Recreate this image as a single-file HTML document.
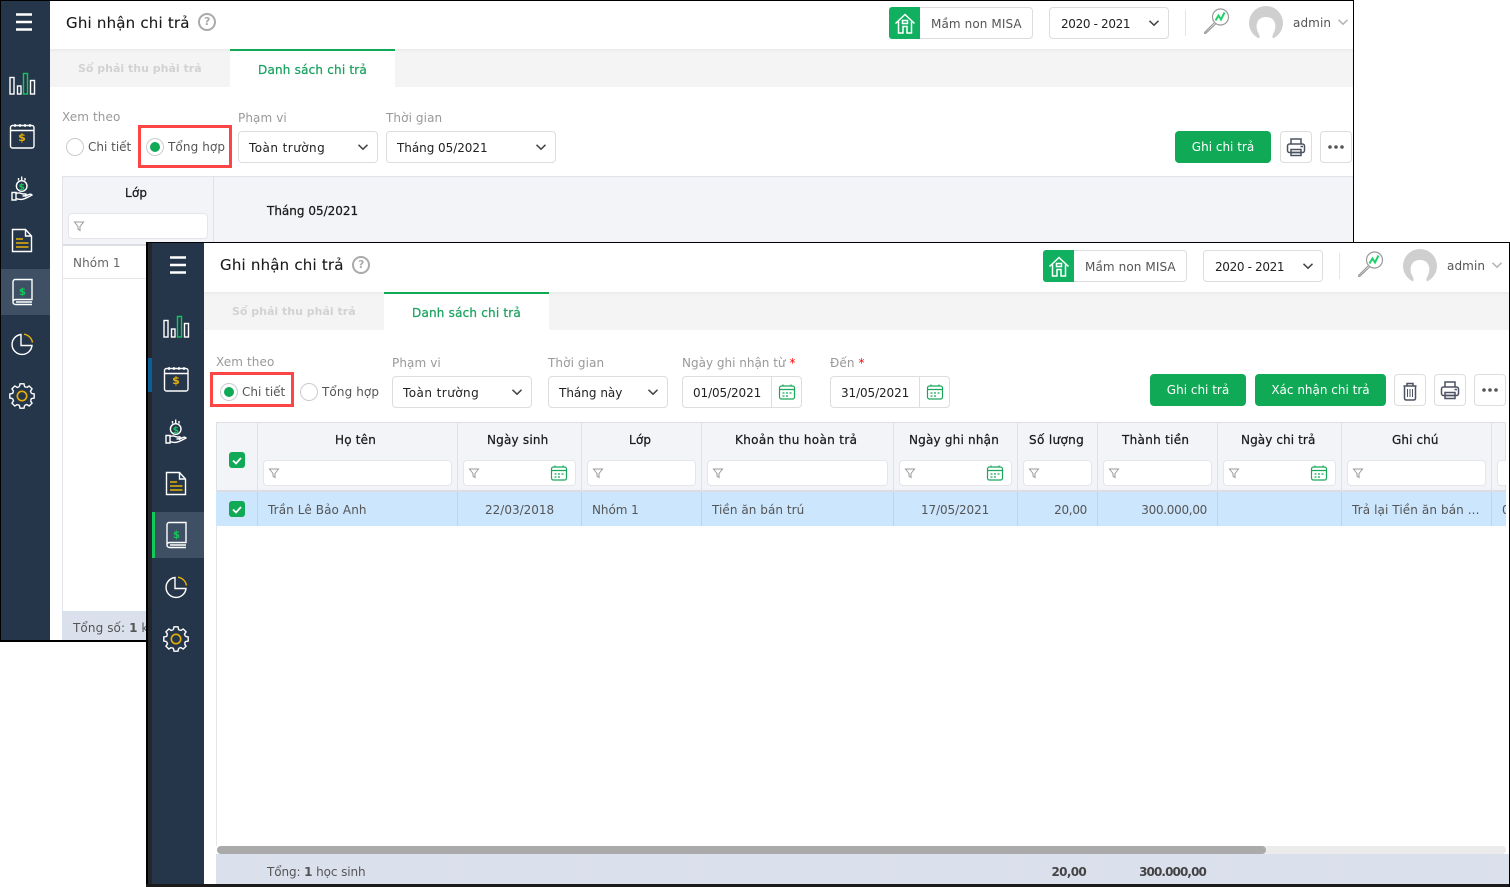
<!DOCTYPE html>
<html lang="vi"><head><meta charset="utf-8"><title>Ghi nhận chi trả</title>
<style>
html,body{margin:0;padding:0;width:1510px;height:887px;overflow:hidden;background:#fff}
div,span,svg{position:absolute;box-sizing:border-box}
.t{white-space:nowrap;font:12px/20px "DejaVu Sans",sans-serif;color:#444;letter-spacing:.1px;margin-top:1px}
.h{color:#1a1a1a;-webkit-text-stroke:.25px #1a1a1a;letter-spacing:.2px}
.l{color:#999}
.d{color:#222}
.g{color:#555}
.b{background:#fff;border:1px solid #ddd;border-radius:4px}
.f{background:#fff;border:1px solid #e6e6ea;border-radius:4px;height:26px;top:460px}
.btn{background:#10a956;border-radius:4px;color:#fff;text-align:center;font:12px/33px "DejaVu Sans",sans-serif;height:32px}
.ln{background:#dfe1ea;width:1px}
.c{background:linear-gradient(#dfe1ea 70px,#c3d3e6 70px);width:1px;top:422px;height:104px}
</style></head><body>
<svg width="0" height="0" style="left:0;top:0">
<defs>
<g id="side" fill="none" stroke="#fff" stroke-width="1.4">
<path d="M16 14.5h16M16 22h16M16 29.5h16" stroke-width="2.4"/>
<rect x="10" y="77.5" width="4" height="16.5"/><rect x="17.5" y="86" width="3.5" height="8"/><rect x="23.5" y="73.5" width="4" height="20.5" stroke="#12c95a"/><rect x="30.5" y="80.5" width="4" height="13.5"/>
<rect x="10.5" y="125.5" width="23.5" height="22.5" rx="2"/><path d="M10.5 130.5h23.5M15 124v3M20 124v3M25 124v3M30 124v3"/>
<circle cx="21.7" cy="186" r="5.3"/><path d="M21.7 176.500v3.500M18.500 178v2.500M25 178v2.500"/><path d="M12 192.500h4v7.500h-4zM16 193.500c3-1.500 5 0 7 .5h3c1 1.500-1 2-3.500 2M16 198.500c5 2 8 1 16-3.500-1-1.500-4-.5-7 1.500"/>
<path d="M12.500 229.500h13l6 6.500v15.500h-19zM25.500 229.500v6.500h6"/><path d="M16 239h7M16 243h12.500M16 247h12.500" stroke="#e8b007" stroke-width="1.500"/>
<path d="M15 279.500h17v20H15.500c-1.500 0-2.500 1-2.500 2.500s1 2.500 2.500 2.500H32M13 302V282c0-1.500 1-2.500 2-2.500M16 302h16"/>
<path d="M21 334.500a10 10 0 1 0 11 11H21z"/><path d="M24 334.200a10 10 0 0 1 8.500 8.300" stroke="#e8b007"/>
<circle cx="22" cy="396" r="4.700" stroke="#e8b007" stroke-width="1.600"/>
<g transform="translate(22 396)" id="gear"><path id="tt" d="M-2.600-9.400L-2-12.200H2L2.600-9.400L4.810-8.480"/>
<use href="#tt" transform="rotate(45)"/><use href="#tt" transform="rotate(90)"/><use href="#tt" transform="rotate(135)"/><use href="#tt" transform="rotate(180)"/><use href="#tt" transform="rotate(225)"/><use href="#tt" transform="rotate(270)"/><use href="#tt" transform="rotate(315)"/></g>
</g>
<g id="top" fill="none">
<path d="M895.500 23.500L905 14.500l9.500 9M898.500 21.500v11.500h4.500v-6.500h4v6.500h4.500V21.500M902.500 20.500h5v3h-5z" stroke="#fff" stroke-width="1.500"/>
<circle cx="1220.500" cy="17" r="8" stroke="#999" stroke-width="1.200"/><path d="M1214 23l-2 2-7 7c-1 1-.5 1.500.5 1.500l8-7.500 2-2" stroke="#999" stroke-width="1.200"/><path d="M1215.500 20.500l3-5 2.500 4 3.500-7" stroke="#1fd16a" stroke-width="2"/>
<circle cx="1266" cy="23" r="17" fill="#cfcfcf"/><path d="M1258 40c3-4 1-5-.5-9-2-5-1-14 8.500-14s10.500 9 8.500 14c-1.500 4-3.500 5-.5 9z" fill="#fff"/>
</g>
<g id="cal" fill="none" stroke="#19a85b" stroke-width="1.200"><rect x="-7.500" y="-6" width="15" height="13" rx="2"/><path d="M-7.500-2.500h15M-4-7.500v2M4-7.500v2"/><path d="M-4.500 1h2M-1 1h2M2.500 1h2M-4.500 4h2M-1 4h2" stroke-width="1.300"/></g>
<path id="fil" d="M-4.500-4h9L1 .5v4L-1 3V.5z" fill="none" stroke="#999" stroke-width="1"/>
<g id="prn" fill="none" stroke="#4d5262" stroke-width="1.500"><path d="M-5-3v-5h10v5"/><rect x="-8.500" y="-3" width="17" height="8.500" rx="2"/><path d="M-5 2.500h10v6H-5zM-5 5.500h10"/><path d="M4.500-.500h2.500" /></g>
<g id="chev" fill="none" stroke="#444" stroke-width="1.500"><path d="M-4.500-2.200L0 2.200l4.500-4.400"/></g>
</defs></svg>

<!-- WINDOW 1 -->
<div style="left:0;top:0;width:1354px;height:642px;background:#fff;border:1px solid #000;border-bottom-width:2px"></div>
<div style="left:1px;top:1px;width:49px;height:639px;background:#25364a"></div>
<div style="left:1px;top:269px;width:49px;height:46px;background:#3f5064"></div>
<div style="left:50px;top:49px;width:1303px;height:38px;background:#f4f4f4;box-shadow:inset 0 3px 3px -2px #e6e6e6"></div>
<div style="left:230px;top:49px;width:165px;height:38px;background:#fff;border-top:2px solid #10a956"></div>
<span class="t h" style="left:66px;top:12px;font-size:15px;-webkit-text-stroke:.1px #1a1a1a;letter-spacing:.2px">Ghi nhận chi trả</span>
<div style="left:198px;top:13px;width:18px;height:18px;border:2px solid #aaa;border-radius:50%"></div><span class="t" style="left:204px;top:11px;font-weight:bold;color:#aaa;font-size:11px">?</span>
<span class="t" style="left:78px;top:58px;font-weight:bold;color:#d2d2d2;font-size:11px;letter-spacing:0">Sổ phải thu phải trả</span>
<span class="t h" style="left:258px;top:59px;color:#1ba261;-webkit-text-stroke:.25px #1ba261">Danh sách chi trả</span>
<div class="b" style="left:889px;top:7px;width:144px;height:32px"></div><div style="left:889px;top:7px;width:31px;height:32px;background:#10b060;border-radius:3px 0 0 3px"></div>
<span class="t g" style="left:931px;top:13px">Mầm non MISA</span>
<div class="b" style="left:1049px;top:7px;width:120px;height:32px"></div><span class="t d" style="left:1061px;top:13px;letter-spacing:-.35px">2020 - 2021</span>
<div style="left:1185px;top:10px;width:1px;height:26px;background:#e6e6e6"></div>
<span class="t g" style="left:1293px;top:12px">admin</span>

<span class="t l" style="left:62px;top:106px">Xem theo</span>
<div style="left:66px;top:138px;width:18px;height:18px;border:1px solid #ccc;border-radius:50%"></div><span class="t g" style="left:88px;top:136px;letter-spacing:0">Chi tiết</span>
<div style="left:138px;top:125px;width:94px;height:43px;border:3px solid #fc4646"></div>
<div style="left:146px;top:138px;width:18px;height:18px;border:1px solid #ccc;border-radius:50%"></div><div style="left:150px;top:142px;width:10px;height:10px;background:#10a956;border-radius:50%"></div>
<span class="t g" style="left:168px;top:136px">Tổng hợp</span>
<span class="t l" style="left:238px;top:107px">Phạm vi</span>
<div class="b" style="left:238px;top:131px;width:140px;height:32px"></div><span class="t d" style="left:249px;top:137px;letter-spacing:.45px">Toàn trường</span>
<span class="t l" style="left:386px;top:107px">Thời gian</span>
<div class="b" style="left:386px;top:131px;width:170px;height:32px"></div><span class="t d" style="left:397px;top:137px;letter-spacing:-.05px">Tháng 05/2021</span>
<div class="btn" style="left:1175px;top:131px;width:96px">Ghi chi trả</div>
<div class="b" style="left:1280px;top:131px;width:32px;height:32px"></div>
<div class="b" style="left:1320px;top:131px;width:32px;height:32px"></div>

<div style="left:62px;top:176px;width:1291px;height:70px;background:#f3f4f8;border:1px solid #e2e3ea;border-right:0;border-bottom:2px solid #dcdde3"></div>
<div class="ln" style="left:213px;top:176px;height:70px"></div>
<div style="left:62px;top:176px;width:1px;height:435px;background:#e2e3ea"></div>
<span class="t h" style="left:125px;top:182px">Lớp</span>
<span class="t h" style="left:267px;top:200px;letter-spacing:0">Tháng 05/2021</span>
<div class="f" style="left:68px;top:213px;width:140px"></div>
<span class="t g" style="left:73px;top:252px;color:#666">Nhóm 1</span>
<div style="left:63px;top:278px;width:1290px;height:1px;background:#e6e6ea"></div>
<div style="left:213px;top:246px;width:1px;height:33px;background:#e6e6ea"></div>
<div style="left:62px;top:611px;width:1291px;height:29px;background:#dae1ed"></div>
<span class="t g" style="left:73px;top:617px">Tổng số: <b>1</b> k</span>

<svg width="1510" height="887" style="left:0;top:0">
<use href="#side"/><use href="#top"/>
<text x="22" y="141" text-anchor="middle" font-family="DejaVu Sans" font-size="11" font-weight="bold" fill="#e8b007">$</text>
<text x="21.700" y="190" text-anchor="middle" font-family="DejaVu Sans" font-size="9" font-weight="bold" fill="#12c95a">$</text>
<text x="22.500" y="295" text-anchor="middle" font-family="DejaVu Sans" font-size="10" font-weight="bold" fill="#12c95a">$</text>
<use href="#chev" transform="translate(1154 23)"/><use href="#chev" transform="translate(1343 22)" opacity=".4"/>
<use href="#chev" transform="translate(363 147)"/><use href="#chev" transform="translate(541 147)"/>
<use href="#prn" transform="translate(1296 147)"/>
<g fill="#555"><circle cx="1330" cy="147" r="1.800"/><circle cx="1336" cy="147" r="1.800"/><circle cx="1342" cy="147" r="1.800"/></g>
<use href="#fil" transform="translate(79 226)"/>
</svg>

<!-- WINDOW 2 -->
<div style="left:146px;top:242px;width:1364px;height:645px;background:#fff;border:1px solid #000;border-left-width:2px;border-right-width:1px;border-bottom:0"></div>
<div style="left:148px;top:243px;width:4px;height:644px;background:#23272b"></div>
<div style="left:148px;top:358px;width:4px;height:34px;background:#0b5f96"></div>
<div style="left:152px;top:243px;width:52px;height:644px;background:#25364a"></div>
<div style="left:152px;top:512px;width:52px;height:46px;background:#3f5064"></div>
<div style="left:152px;top:512px;width:3px;height:46px;background:#12c95a"></div>
<div style="left:204px;top:292px;width:1305px;height:38px;background:#f4f4f4;box-shadow:inset 0 3px 3px -2px #e6e6e6"></div>
<div style="left:384px;top:292px;width:165px;height:38px;background:#fff;border-top:2px solid #10a956"></div>
<span class="t h" style="left:220px;top:254px;font-size:15px;-webkit-text-stroke:.1px #1a1a1a;letter-spacing:.2px">Ghi nhận chi trả</span>
<div style="left:352px;top:256px;width:18px;height:18px;border:2px solid #aaa;border-radius:50%"></div><span class="t" style="left:358px;top:254px;font-weight:bold;color:#aaa;font-size:11px">?</span>
<span class="t" style="left:232px;top:301px;font-weight:bold;color:#d2d2d2;font-size:11px;letter-spacing:0">Sổ phải thu phải trả</span>
<span class="t h" style="left:412px;top:302px;color:#1ba261;-webkit-text-stroke:.25px #1ba261">Danh sách chi trả</span>
<div class="b" style="left:1043px;top:250px;width:144px;height:32px"></div><div style="left:1043px;top:250px;width:31px;height:32px;background:#10b060;border-radius:3px 0 0 3px"></div>
<span class="t g" style="left:1085px;top:256px">Mầm non MISA</span>
<div class="b" style="left:1203px;top:250px;width:120px;height:32px"></div><span class="t d" style="left:1215px;top:256px;letter-spacing:-.35px">2020 - 2021</span>
<div style="left:1339px;top:253px;width:1px;height:26px;background:#e6e6e6"></div>
<span class="t g" style="left:1447px;top:255px">admin</span>

<span class="t l" style="left:216px;top:351px">Xem theo</span>
<div style="left:210px;top:372px;width:84px;height:35px;border:3px solid #fc4646"></div>
<div style="left:220px;top:383px;width:18px;height:18px;border:1px solid #ccc;border-radius:50%"></div><div style="left:224px;top:387px;width:10px;height:10px;background:#10a956;border-radius:50%"></div>
<span class="t g" style="left:242px;top:381px;letter-spacing:0">Chi tiết</span>
<div style="left:300px;top:383px;width:18px;height:18px;border:1px solid #ccc;border-radius:50%"></div><span class="t g" style="left:322px;top:381px">Tổng hợp</span>
<span class="t l" style="left:392px;top:352px">Phạm vi</span>
<div class="b" style="left:392px;top:376px;width:140px;height:32px"></div><span class="t d" style="left:403px;top:382px;letter-spacing:.45px">Toàn trường</span>
<span class="t l" style="left:548px;top:352px">Thời gian</span>
<div class="b" style="left:548px;top:376px;width:120px;height:32px"></div><span class="t d" style="left:559px;top:382px;letter-spacing:0">Tháng này</span>
<span class="t l" style="left:682px;top:352px;letter-spacing:0">Ngày ghi nhận từ <span style="position:static;color:#f00">*</span></span>
<div class="b" style="left:682px;top:376px;width:120px;height:32px"></div><div style="left:771px;top:376px;width:1px;height:32px;background:#ddd"></div><span class="t d" style="left:693px;top:382px;letter-spacing:-.1px">01/05/2021</span>
<span class="t l" style="left:830px;top:352px">Đến <span style="position:static;color:#f00">*</span></span>
<div class="b" style="left:830px;top:376px;width:120px;height:32px"></div><div style="left:919px;top:376px;width:1px;height:32px;background:#ddd"></div><span class="t d" style="left:841px;top:382px;letter-spacing:-.1px">31/05/2021</span>
<div class="btn" style="left:1150px;top:374px;width:96px">Ghi chi trả</div>
<div class="btn" style="left:1255px;top:374px;width:131px">Xác nhận chi trả</div>
<div class="b" style="left:1394px;top:374px;width:32px;height:32px"></div>
<div class="b" style="left:1434px;top:374px;width:32px;height:32px"></div>
<div class="b" style="left:1474px;top:374px;width:32px;height:32px"></div>

<div style="left:216px;top:422px;width:1290px;height:70px;background:#f3f4f8;border:1px solid #e0e1e8;border-bottom:2px solid #dcdde3"></div>
<div style="left:216px;top:492px;width:1290px;height:34px;background:#cce6fd"></div>
<div style="left:216px;top:526px;width:1px;height:320px;background:#e6e6ea"></div>
<div style="left:216px;top:854px;width:1293px;height:30px;background:#dae1ed"></div>
<div class="c" style="left:257px"></div><div class="c" style="left:457px"></div><div class="c" style="left:581px"></div><div class="c" style="left:701px"></div><div class="c" style="left:893px"></div><div class="c" style="left:1017px"></div><div class="c" style="left:1097px"></div><div class="c" style="left:1217px"></div><div class="c" style="left:1341px"></div><div class="c" style="left:1491px"></div>
<div class="ln" style="left:256px;top:854px;height:30px"></div><div class="ln" style="left:456px;top:854px;height:30px"></div><div class="ln" style="left:580px;top:854px;height:30px"></div><div class="ln" style="left:700px;top:854px;height:30px"></div><div class="ln" style="left:892px;top:854px;height:30px"></div><div class="ln" style="left:1016px;top:854px;height:30px"></div><div class="ln" style="left:1096px;top:854px;height:30px"></div><div class="ln" style="left:1216px;top:854px;height:30px"></div><div class="ln" style="left:1340px;top:854px;height:30px"></div><div class="ln" style="left:1490px;top:854px;height:30px"></div>

<span class="t h" style="left:335px;top:429px">Họ tên</span>
<span class="t h" style="left:487px;top:429px">Ngày sinh</span>
<span class="t h" style="left:629px;top:429px">Lớp</span>
<span class="t h" style="left:735px;top:429px;letter-spacing:.35px">Khoản thu hoàn trả</span>
<span class="t h" style="left:909px;top:429px">Ngày ghi nhận</span>
<span class="t h" style="left:1029px;top:429px;letter-spacing:.35px">Số lượng</span>
<span class="t h" style="left:1122px;top:429px;letter-spacing:.3px">Thành tiền</span>
<span class="t h" style="left:1241px;top:429px;letter-spacing:.1px">Ngày chi trả</span>
<span class="t h" style="left:1392px;top:429px;letter-spacing:.1px">Ghi chú</span>

<div class="f" style="left:263px;width:189px"></div><div class="f" style="left:463px;width:113px"></div><div class="f" style="left:587px;width:109px"></div><div class="f" style="left:707px;width:181px"></div><div class="f" style="left:899px;width:113px"></div><div class="f" style="left:1023px;width:69px"></div><div class="f" style="left:1103px;width:109px"></div><div class="f" style="left:1223px;width:113px"></div><div class="f" style="left:1347px;width:139px"></div><div class="f" style="left:1497px;width:9px;border-right:0;border-radius:4px 0 0 4px"></div>

<div style="left:229px;top:452px;width:16px;height:16px;background:#10a956;border-radius:3px"></div>
<div style="left:229px;top:501px;width:16px;height:16px;background:#10a956;border-radius:3px"></div>

<span class="t g" style="left:268px;top:499px">Trần Lê Bảo Anh</span>
<span class="t g" style="left:485px;top:499px;letter-spacing:0">22/03/2018</span>
<span class="t g" style="left:592px;top:499px;letter-spacing:-.05px">Nhóm 1</span>
<span class="t g" style="left:712px;top:499px;letter-spacing:.05px">Tiền ăn bán trú</span>
<span class="t g" style="left:921px;top:499px;letter-spacing:-.1px">17/05/2021</span>
<span class="t g" style="right:423px;top:499px;letter-spacing:-.3px">20,00</span>
<span class="t g" style="right:303px;top:499px;letter-spacing:-.3px">300.000,00</span>
<span class="t g" style="left:1352px;top:499px">Trả lại Tiền ăn bán ...</span>
<span class="t g" style="left:1502px;top:499px;width:4px;overflow:hidden">0</span>

<div style="left:217px;top:846px;width:1289px;height:8px;background:#ebebeb;border-radius:4px"></div>
<div style="left:217px;top:846px;width:1049px;height:8px;background:#aaa;border-radius:4px"></div>
<span class="t g" style="left:267px;top:861px;letter-spacing:-.1px">Tổng: <b>1</b> học sinh</span>
<span class="t" style="right:424px;top:861px;font-weight:bold;color:#444;letter-spacing:-.7px">20,00</span>
<span class="t" style="right:304px;top:861px;font-weight:bold;color:#444;letter-spacing:-.9px">300.000,00</span>
<div style="left:146px;top:884px;width:1364px;height:3px;background:#1b1b1b"></div>
<div style="left:1509px;top:242px;width:1px;height:645px;background:#000"></div>

<svg width="1510" height="887" style="left:0;top:0">
<use href="#side" transform="translate(154 243)"/><use href="#top" transform="translate(154 243)"/>
<text x="176" y="384" text-anchor="middle" font-family="DejaVu Sans" font-size="11" font-weight="bold" fill="#e8b007">$</text>
<text x="175.700" y="433" text-anchor="middle" font-family="DejaVu Sans" font-size="9" font-weight="bold" fill="#12c95a">$</text>
<text x="176.500" y="538" text-anchor="middle" font-family="DejaVu Sans" font-size="10" font-weight="bold" fill="#12c95a">$</text>
<use href="#chev" transform="translate(1308 266)"/><use href="#chev" transform="translate(1497 265)" opacity=".4"/>
<use href="#chev" transform="translate(517 392)"/><use href="#chev" transform="translate(653 392)"/>
<use href="#cal" transform="translate(787 392)"/><use href="#cal" transform="translate(935 392)"/>
<use href="#cal" transform="translate(559 473)"/><use href="#cal" transform="translate(995 473)"/><use href="#cal" transform="translate(1319 473)"/>
<g fill="none" stroke="#4d5262" stroke-width="1.500"><path d="M1403.500 386h13M1407 386v-2.500h6v2.500M1404.500 386v12c0 1.500 .5 2 2 2h7c1.500 0 2-.5 2-2v-12"/><path d="M1407.500 389v8M1410 389v8M1412.500 389v8" stroke-width="1"/></g>
<use href="#prn" transform="translate(1450 390)"/>
<g fill="#555"><circle cx="1484" cy="390" r="1.800"/><circle cx="1490" cy="390" r="1.800"/><circle cx="1496" cy="390" r="1.800"/></g>
<use href="#fil" transform="translate(274 473)"/><use href="#fil" transform="translate(474 473)"/><use href="#fil" transform="translate(598 473)"/><use href="#fil" transform="translate(718 473)"/><use href="#fil" transform="translate(910 473)"/><use href="#fil" transform="translate(1034 473)"/><use href="#fil" transform="translate(1114 473)"/><use href="#fil" transform="translate(1234 473)"/><use href="#fil" transform="translate(1358 473)"/>
<g fill="none" stroke="#fff" stroke-width="1.800"><path d="M233 460.500l3 3 5-5.500"/><path d="M233 509.500l3 3 5-5.500"/></g>
</svg>
</body></html>
